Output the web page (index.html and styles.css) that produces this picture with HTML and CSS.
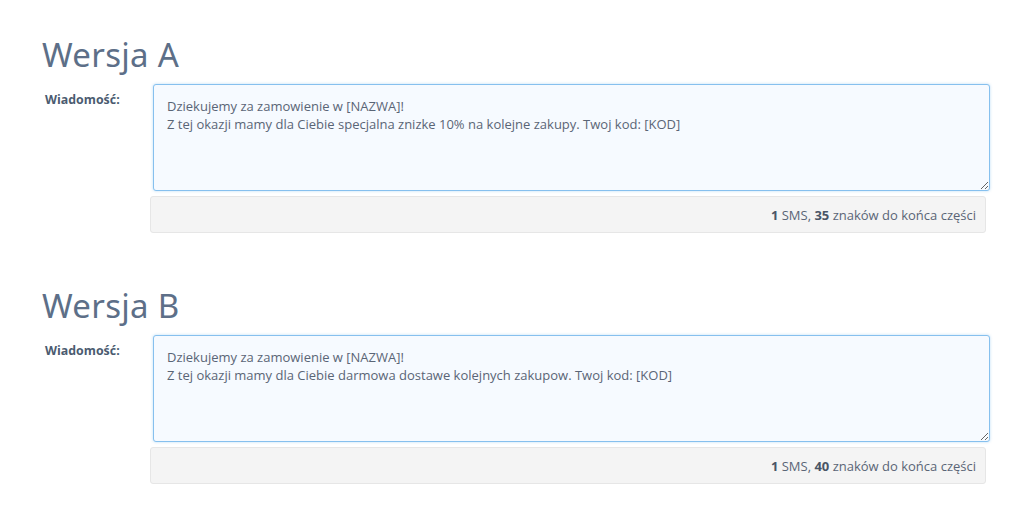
FILE: index.html
```html
<!DOCTYPE html>
<html lang="pl">
<head>
<meta charset="utf-8">
<link rel="stylesheet" href="styles.css">
</head>
<body>
<div class="page">
  <section class="version">
    <h2 class="title">Wersja A</h2>
    <div class="row">
      <label class="label">Wiadomość:</label>
      <div class="field">
        <textarea class="message">Dziekujemy za zamowienie w [NAZWA]!
Z tej okazji mamy dla Ciebie specjalna znizke 10% na kolejne zakupy. Twoj kod: [KOD]</textarea>
        <div class="counter"><span><b>1</b> SMS, <b>35</b> znaków do końca części</span></div>
      </div>
    </div>
  </section>
  <section class="version">
    <h2 class="title">Wersja B</h2>
    <div class="row">
      <label class="label">Wiadomość:</label>
      <div class="field">
        <textarea class="message">Dziekujemy za zamowienie w [NAZWA]!
Z tej okazji mamy dla Ciebie darmowa dostawe kolejnych zakupow. Twoj kod: [KOD]</textarea>
        <div class="counter"><span><b>1</b> SMS, <b>40</b> znaków do końca części</span></div>
      </div>
    </div>
  </section>
</div>
</body>
</html>
```
FILE: styles.css
```css
html, body {
  margin: 0;
  padding: 0;
  background: #ffffff;
}
.page {
  padding: 34px 0 0 42px;
  width: 948px;
  font-family: "Open Sans", "Noto Sans", sans-serif;
}
.version {
  margin-bottom: 52px;
}
.title {
  margin: 0 0 8px 0;
  font-family: "Noto Sans", "Open Sans", sans-serif;
  font-weight: 400;
  font-size: 33px;
  line-height: 42px;
  color: #5d6f88;
  letter-spacing: 0.3px;
}
.row {
  display: flex;
}
.label {
  width: 108px;
  padding: 7px 0 0 3px;
  font-size: 12.4px;
  font-weight: 700;
  color: #4b5b70;
}
.field {
  width: 840px;
  display: flex;
  flex-direction: column;
  gap: 5px;
}
.message {
  display: block;
  margin-left: 3px;
  width: 837px;
  height: 107px;
  box-sizing: border-box;
  padding: 12px 13px;
  border: 1px solid #86c0ee;
  border-radius: 3px;
  background: #f6faff;
  box-shadow: 0 0 3px rgba(102, 175, 233, 0.45);
  font-family: "Open Sans", "Noto Sans", sans-serif;
  font-size: 13px;
  line-height: 18px;
  color: #5a6576;
  resize: vertical;
  outline: none;
}
.counter {
  width: 836px;
  height: 37px;
  box-sizing: border-box;
  padding: 0 9px;
  display: flex;
  align-items: center;
  justify-content: flex-end;
  background: #f4f4f4;
  border: 1px solid #e6e6e6;
  border-radius: 3px;
  font-size: 13px;
  color: #5a6576;
}
.counter b {
  font-weight: 700;
  color: #4a5566;
}
```
